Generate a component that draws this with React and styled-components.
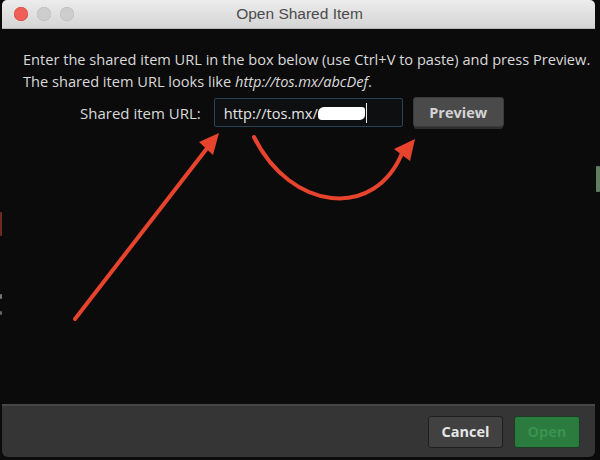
import React from 'react';
import styled, { createGlobalStyle } from 'styled-components';

const GlobalStyle = createGlobalStyle`
  html, body { margin: 0; padding: 0; background: #0b0b0b; }
  body { font-family: "Open Sans", "Noto Sans", sans-serif; }
`;

const Desktop = styled.div`
  position: relative;
  width: 600px;
  height: 460px;
  overflow: hidden;
  background: #0b0b0b;
`;

const Peek = styled.span`
  position: absolute;
  left: ${(p) => p.x}px;
  top: ${(p) => p.y}px;
  width: ${(p) => p.w}px;
  height: ${(p) => p.h}px;
  background: ${(p) => p.bg};
  border-radius: 1px;
`;

const Window = styled.div`
  position: absolute;
  left: 2px;
  top: 0;
  width: 593px;
  height: 457px;
  display: flex;
  flex-direction: column;
  background: #0b0b0b;
  border-radius: 5px 5px 6px 6px;
  overflow: hidden;
`;

const TitleBar = styled.div`
  position: relative;
  height: 29px;
  flex: none;
  display: flex;
  align-items: center;
  justify-content: center;
  background: linear-gradient(#ececec, #d5d5d5);
  border-bottom: 1px solid #b8b8b8;
  box-sizing: border-box;
`;

const Lights = styled.div`
  position: absolute;
  left: 12px;
  top: 7px;
  display: flex;
  gap: 9px;
`;

const Light = styled.span`
  width: 14px;
  height: 14px;
  border-radius: 50%;
  background: ${(p) => (p.red ? '#ee5f57' : '#cdcdcd')};
  box-shadow: inset 0 0 0 0.5px ${(p) => (p.red ? '#d9463d' : '#bababa')};
`;

const Title = styled.div`
  font-family: "Liberation Sans", Arial, sans-serif;
  font-size: 15.5px;
  color: #4b4b4b;
  margin-left: 2px;
`;

const Body = styled.div`
  flex: 1;
  padding: 20px 0 0 21px;
  color: #d9d9d9;
  font-size: 14.6px;
`;

const Intro = styled.p`
  margin: 0;
  line-height: 21.5px;
  em { font-style: italic; }
`;

const UrlRow = styled.div`
  display: flex;
  align-items: center;
  margin: 6px 0 0 57px;
`;

const Label = styled.span`
  font-size: 15px;
  margin-right: 13px;
`;

const UrlBox = styled.div`
  width: 189px;
  height: 29px;
  box-sizing: border-box;
  display: flex;
  align-items: center;
  padding-left: 9px;
  background: #0e0f10;
  border: 1px solid #2a4457;
  border-radius: 2px;
  color: #e4e4e4;
  font-size: 14.6px;
`;

const Redact = styled.span`
  display: inline-block;
  width: 47px;
  height: 13px;
  background: #fff;
  border-radius: 6px 3px 5px 4px;
  margin-top: 1px;
`;

const Caret = styled.span`
  display: inline-block;
  width: 1.5px;
  height: 20px;
  background: #f0f0f0;
  margin-left: 1px;
`;

const Button = styled.button`
  font-family: "Open Sans", "Noto Sans", sans-serif;
  font-weight: 700;
  font-size: 14.5px;
  height: ${(p) => p.h || 30}px;
  width: ${(p) => p.w}px;
  border-radius: 3px;
  border: 1px solid ${(p) => p.edge};
  background: ${(p) => p.bg};
  color: ${(p) => p.fg};
  padding: 0;
`;

const PreviewButton = styled(Button)`
  margin-left: 10px;
  margin-top: -1px;
  box-shadow: 0 3px 0 -1px #2e2e2e;
`;

const Footer = styled.div`
  height: 51px;
  flex: none;
  display: flex;
  align-items: center;
  justify-content: flex-end;
  gap: 11px;
  padding-right: 15px;
  background: #353535;
  border-top: 2px solid #474747;
`;

const Overlay = styled.svg`
  position: absolute;
  left: 0;
  top: 0;
  pointer-events: none;
`;

const RED = '#e8432d';

const Arrows = () => (
  <Overlay width="600" height="460" viewBox="0 0 600 460">
    <line x1="75" y1="319" x2="208" y2="147" stroke={RED} strokeWidth="4" strokeLinecap="round" />
    <polygon points="219,133 199,142 213,155" fill={RED} />
    <path d="M254 137 C 290 210, 375 222, 403 151" fill="none" stroke={RED} strokeWidth="4" strokeLinecap="round" />
    <polygon points="415,139 394,149 410,161" fill={RED} />
  </Overlay>
);

export default function App() {
  return (
    <Desktop>
      <GlobalStyle />
      <Peek x={0} y={212} w={3} h={24} bg="#6e2a22" />
      <Peek x={0} y={294} w={2} h={5} bg="#777" />
      <Peek x={0} y={311} w={2} h={4} bg="#666" />
      <Peek x={596} y={166} w={4} h={26} bg="#5f7d5f" />
      <Window>
        <TitleBar>
          <Lights>
            <Light red />
            <Light />
            <Light />
          </Lights>
          <Title>Open Shared Item</Title>
        </TitleBar>
        <Body>
          <Intro>
            Enter the shared item URL in the box below (use Ctrl+V to paste) and press Preview.
            <br />
            The shared item URL looks like <em>http://tos.mx/abcDef</em>.
          </Intro>
          <UrlRow>
            <Label>Shared item URL:</Label>
            <UrlBox>
              http://tos.mx/
              <Redact />
              <Caret />
            </UrlBox>
            <PreviewButton w={91} bg="#4a4a4a" edge="#3a3a3a" fg="#d4d4d4">Preview</PreviewButton>
          </UrlRow>
        </Body>
        <Footer>
          <Button w={75} h={32} bg="#414141" edge="#1e1e1e" fg="#e6e6e6">Cancel</Button>
          <Button w={66} h={32} bg="#2b7a3e" edge="#1c3c24" fg="#3a944f">Open</Button>
        </Footer>
      </Window>
      <Arrows />
    </Desktop>
  );
}
